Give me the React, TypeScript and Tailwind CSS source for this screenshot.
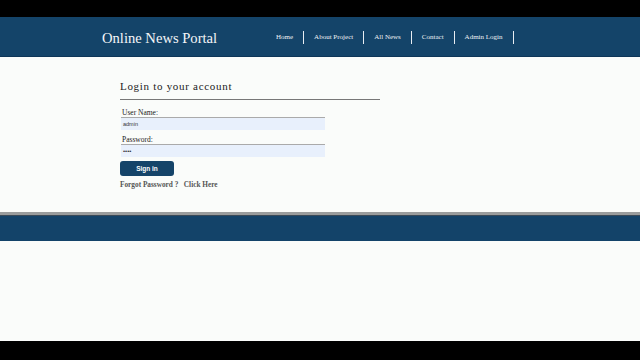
const NAV = ["Home", "About Project", "All News", "Contact", "Admin Login"];

export default function App() {
  return (
    <div className="flex h-[360px] w-[640px] flex-col overflow-hidden bg-[#fafcfa] font-['Liberation_Serif',serif]">
      {/* letterbox top */}
      <div className="h-[17px] shrink-0 bg-black" />

      {/* header */}
      <header className="flex h-[40px] shrink-0 items-center border-b border-[#0e3658] bg-[#144469] pt-[2px]">
        <div className="ml-[102px] w-[163px] text-[14.6px] leading-[20px] text-[#f4f6f8]">
          Online News Portal
        </div>
        <nav className="ml-[1px] flex items-center">
          {NAV.map((item) => (
            <div key={item} className="flex items-center">
              <span className="px-[10px] text-[7px] text-[#eef2f5]">{item}</span>
              <span className="h-[13px] w-px bg-[#e8edf2]" />
            </div>
          ))}
        </nav>
      </header>

      {/* main */}
      <main className="h-[155px] shrink-0 pl-[120px] pt-[22px]">
        <h2 className="text-[11px] leading-[14px] tracking-[0.7px] text-[#222]">
          Login to your account
        </h2>
        <div className="mt-[6px] h-px w-[260px] bg-[#777]" />

        <div className="ml-[2px] mt-[9px] text-[7.5px] leading-[8px] text-[#222]">User Name:</div>
        <div className="ml-px flex h-[13px] w-[204px] items-center border-t border-[#aaa] bg-[#e8f0fc] pl-[2px] font-['Liberation_Sans',sans-serif] text-[5.5px] text-[#333]">
          admin
        </div>

        <div className="ml-[2px] mt-[6px] text-[7.5px] leading-[8px] text-[#222]">Password:</div>
        <div className="ml-px flex h-[13px] w-[204px] items-center border-t border-[#aaa] bg-[#e8f0fc] pl-[2px] font-['Liberation_Sans',sans-serif] text-[6px] text-[#333]">
          ••••
        </div>

        <button className="mt-[4px] flex h-[15px] w-[54px] items-center justify-center rounded-[3px] bg-[#154469] font-['Liberation_Sans',sans-serif] text-[6.5px] font-bold text-white">
          Sign in
        </button>

        <div className="mt-[5px] text-[7.3px] font-bold leading-[8px] text-[#555]">
          Forgot Password ?&nbsp;&nbsp;&nbsp;Click Here
        </div>
      </main>

      {/* footer */}
      <div className="h-[3px] shrink-0 bg-[#9a9c9c]" />
      <footer className="h-[26px] shrink-0 border-t border-[#3a4a58] bg-[#134369]" />

      <div className="flex-1" />
      <div className="h-[19px] shrink-0 bg-black" />
    </div>
  );
}
